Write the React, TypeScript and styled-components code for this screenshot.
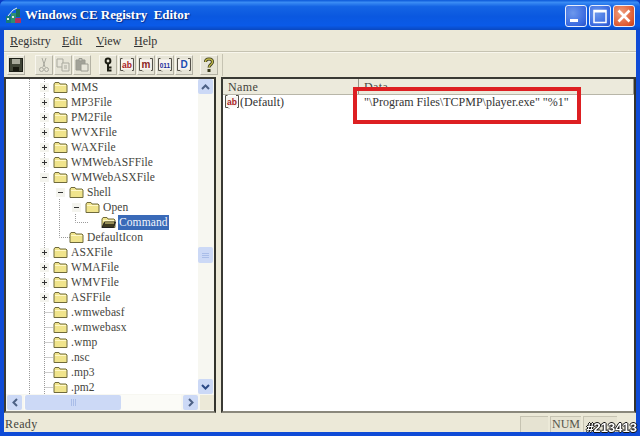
import styled, { createGlobalStyle } from 'styled-components';

const GlobalStyle = createGlobalStyle`
  html, body {
    margin: 0;
    padding: 0;
    width: 640px;
    height: 436px;
    overflow: hidden;
    background: #0a3bc4;
  }
`;

type TreeItem = {
  label: string;
  level: number;
  expander?: 'plus' | 'minus';
  selected?: boolean;
};

const treeItems: TreeItem[] = [
  { label: 'MMS', level: 0, expander: 'plus' },
  { label: 'MP3File', level: 0, expander: 'plus' },
  { label: 'PM2File', level: 0, expander: 'plus' },
  { label: 'WVXFile', level: 0, expander: 'plus' },
  { label: 'WAXFile', level: 0, expander: 'plus' },
  { label: 'WMWebASFFile', level: 0, expander: 'plus' },
  { label: 'WMWebASXFile', level: 0, expander: 'minus' },
  { label: 'Shell', level: 1, expander: 'minus' },
  { label: 'Open', level: 2, expander: 'minus' },
  { label: 'Command', level: 3, selected: true },
  { label: 'DefaultIcon', level: 1 },
  { label: 'ASXFile', level: 0, expander: 'plus' },
  { label: 'WMAFile', level: 0, expander: 'plus' },
  { label: 'WMVFile', level: 0, expander: 'plus' },
  { label: 'ASFFile', level: 0, expander: 'plus' },
  { label: '.wmwebasf', level: 0 },
  { label: '.wmwebasx', level: 0 },
  { label: '.wmp', level: 0 },
  { label: '.nsc', level: 0 },
  { label: '.mp3', level: 0 },
  { label: '.pm2', level: 0 },
];

function FolderIcon({ open }: { open?: boolean }) {
  return (
    <svg width="15" height="13" viewBox="0 0 15 13">
      <path d="M1 3 L2 1.5 H6 L7 3 H13 L14 4 V11.5 H1 Z" fill="#f0e48c" stroke="#6f6a3c" />
      <path d="M2 4.5 H13" stroke="#fff8c8" />
      {open && <path d="M1 11.5 L3.5 6 H14.5 L12.5 11.5 Z" fill="#3d3a20" stroke="#222" />}
      {open && <path d="M4 7 H13" stroke="#f3e58e" />}
    </svg>
  );
}

function SaveIcon() {
  return (
    <svg width="16" height="16" viewBox="0 0 16 16">
      <rect x="1.5" y="1.5" width="13" height="13" fill="#3f4436" stroke="#1c1e16" />
      <rect x="4" y="2" width="8" height="5" fill="#a8aa9c" />
      <rect x="5" y="10" width="6" height="4" fill="#16180f" />
    </svg>
  );
}

function CutIcon() {
  return (
    <svg width="16" height="16" viewBox="0 0 16 16" fill="none" stroke="#a9a99e">
      <path d="M6 1 L9 10 M10 1 L7 10" />
      <circle cx="5.5" cy="12.5" r="2" />
      <circle cx="10.5" cy="12.5" r="2" />
    </svg>
  );
}

function CopyIcon() {
  return (
    <svg width="16" height="16" viewBox="0 0 16 16" fill="#e8e6da" stroke="#a9a99e">
      <path d="M2 2 H8 V10 H2 Z" />
      <path d="M7 6 H14 V14 H7 Z" />
      <path d="M9 9 H12 M9 11 H12" />
    </svg>
  );
}

function PasteIcon() {
  return (
    <svg width="16" height="16" viewBox="0 0 16 16" stroke="#9a9a90">
      <path d="M2 3 H11 V13 H2 Z" fill="#a2a298" />
      <path d="M5 1.5 H8 V4 H5 Z" fill="#c9c9bf" />
      <path d="M7 7 H14 V14 H7 Z" fill="#e8e6da" />
    </svg>
  );
}

function KeyIcon() {
  return (
    <svg width="16" height="16" viewBox="0 0 16 16" fill="none" stroke="#1c1c12" strokeWidth="2">
      <circle cx="8" cy="4" r="2.4" />
      <path d="M8 6.5 V14.5 M8 10.5 H11.5 M8 13.5 H11.5" />
    </svg>
  );
}

function ValueIcon({ text, color, size = 8.5 }: { text: string; color: string; size?: number }) {
  return (
    <svg width="16" height="16" viewBox="0 0 16 16">
      <path d="M2 2.5 H13.5 V12.5 H2 Z" fill="#f8f4f0" />
      <path d="M3.5 1.5 H1.5 V13.5 H4 L5 14.5 M12 1.5 H14.5 V13.5 H13" stroke="#55524a" fill="none" />
      <text
        x="8"
        y="10.5"
        fontSize={size}
        fontWeight="700"
        fontFamily="Liberation Sans, sans-serif"
        textAnchor="middle"
        fill={color}
      >
        {text}
      </text>
    </svg>
  );
}

function HelpIcon() {
  return (
    <svg width="16" height="16" viewBox="0 0 16 16" fill="none">
      <path d="M4.5 5 C4.5 1 11.5 1 11.5 5 C11.5 7.5 8 7.5 8 10.5" stroke="#3a3a1c" strokeWidth="3" />
      <path d="M4.5 5 C4.5 1 11.5 1 11.5 5 C11.5 7.5 8 7.5 8 10.5" stroke="#bdb648" strokeWidth="1.4" />
      <rect x="6.5" y="12" width="3" height="3" fill="#3a3a1c" />
    </svg>
  );
}

function AppIcon() {
  return (
    <svg width="17" height="17" viewBox="0 0 17 17">
      <rect x="1" y="9" width="5" height="7" fill="#177a7a" />
      <rect x="6" y="6" width="5" height="10" fill="#2c8f72" />
      <rect x="10" y="11" width="6" height="5" fill="#b03060" />
      <rect x="11" y="2" width="4" height="8" fill="#1b6f5a" />
      <path d="M3 9 L8 3 L12 1" stroke="#e8f0e8" fill="none" />
      <rect x="2" y="11" width="2" height="2" fill="#d8e8e0" />
      <rect x="7" y="9" width="2" height="2" fill="#d8e8e0" />
    </svg>
  );
}

function App() {
  return (
    <Frame>
      <GlobalStyle />
      <TitleBar>
        <TitleLeft>
          <AppIcon />
          <TitleText>Windows CE Registry&nbsp; Editor</TitleText>
        </TitleLeft>
        <TitleButtons>
          <CaptionButton>
            <svg width="20" height="20" viewBox="0 0 20 20">
              <rect x="4" y="13" width="8" height="3" fill="#fff" />
            </svg>
          </CaptionButton>
          <CaptionButton>
            <svg width="20" height="20" viewBox="0 0 20 20" fill="none" stroke="#fff">
              <rect x="4" y="4.5" width="12" height="12" strokeWidth="1.5" />
              <path d="M4 5.5 H16" strokeWidth="2" />
            </svg>
          </CaptionButton>
          <CaptionButton $danger>
            <svg width="20" height="20" viewBox="0 0 20 20" stroke="#fff" strokeWidth="2.6">
              <path d="M4.5 4.5 L15.5 15.5 M15.5 4.5 L4.5 15.5" />
            </svg>
          </CaptionButton>
        </TitleButtons>
      </TitleBar>

      <Body>
        <MenuBar>
          <MenuItem $width={52}><u>R</u>egistry</MenuItem>
          <MenuItem $width={34}><u>E</u>dit</MenuItem>
          <MenuItem $width={38}><u>V</u>iew</MenuItem>
          <MenuItem $width={40}><u>H</u>elp</MenuItem>
        </MenuBar>

        <ToolBar>
          <ToolButton><SaveIcon /></ToolButton>
          <ToolGap $width={8} />
          <ToolButton><CutIcon /></ToolButton>
          <ToolButton><CopyIcon /></ToolButton>
          <ToolButton><PasteIcon /></ToolButton>
          <ToolGap $width={6} />
          <ToolButton><KeyIcon /></ToolButton>
          <ToolButton><ValueIcon text="ab" color="#a81c24" /></ToolButton>
          <ToolButton><ValueIcon text="m" color="#8c1c1c" size={10} /></ToolButton>
          <ToolButton><ValueIcon text="011" color="#1c2c9c" size={6.5} /></ToolButton>
          <ToolButton><ValueIcon text="D" color="#1c4cb0" size={10} /></ToolButton>
          <ToolGap $width={5} />
          <ToolButton><HelpIcon /></ToolButton>
          <ToolDivider />
        </ToolBar>

        <Panes>
          <TreePane>
            <TreeArea>
              <Tree>
                <TreeLines width="195" height="316" viewBox="0 0 195 316">
                  <g stroke="#9a9a9a" strokeDasharray="1 1" fill="none">
                    <path d="M23.5 0 V316" />
                    <path d="M38.5 0 V316" />
                    <path d="M53.5 120 V158.5 H66" />
                    <path d="M69.5 135 V143.5 H82" />
                    <path d="M38.5 233.5 H47 M38.5 248.5 H47 M38.5 263.5 H47 M38.5 278.5 H47 M38.5 293.5 H47 M38.5 308.5 H47" />
                  </g>
                </TreeLines>
                {treeItems.map((item) => (
                  <TreeRow key={item.label} $level={item.level}>
                    <ExpanderSlot>
                      {item.expander && (
                        <Expander>
                          <svg width="9" height="9" viewBox="0 0 9 9" stroke="#333">
                            <path d="M2 4.5 H7" />
                            {item.expander === 'plus' && <path d="M4.5 2 V7" />}
                          </svg>
                        </Expander>
                      )}
                    </ExpanderSlot>
                    <FolderIcon open={item.selected} />
                    <TreeLabel $selected={item.selected}>{item.label}</TreeLabel>
                  </TreeRow>
                ))}
              </Tree>
              <VScroll>
                <ScrollButton>
                  <svg width="9" height="6" viewBox="0 0 9 6" fill="none" stroke="#4d6185" strokeWidth="2">
                    <path d="M1 5 L4.5 1.5 L8 5" />
                  </svg>
                </ScrollButton>
                <VTrack>
                  <VThumb>
                    <svg width="7" height="7" viewBox="0 0 7 7" stroke="#a9bde8">
                      <path d="M0 1.5 H7 M0 3.5 H7 M0 5.5 H7" />
                    </svg>
                  </VThumb>
                </VTrack>
                <ScrollButton>
                  <svg width="9" height="6" viewBox="0 0 9 6" fill="none" stroke="#2c4a86" strokeWidth="2">
                    <path d="M1 1 L4.5 4.5 L8 1" />
                  </svg>
                </ScrollButton>
              </VScroll>
            </TreeArea>
            <HScroll>
              <ScrollButton>
                <svg width="6" height="9" viewBox="0 0 6 9" fill="none" stroke="#4d6185" strokeWidth="2">
                  <path d="M5 1 L1.5 4.5 L5 8" />
                </svg>
              </ScrollButton>
              <HTrack>
                <HThumb>
                  <svg width="7" height="7" viewBox="0 0 7 7" stroke="#a9bde8">
                    <path d="M1.5 0 V7 M3.5 0 V7 M5.5 0 V7" />
                  </svg>
                </HThumb>
              </HTrack>
              <ScrollButton>
                <svg width="6" height="9" viewBox="0 0 6 9" fill="none" stroke="#4d6185" strokeWidth="2">
                  <path d="M1 1 L4.5 4.5 L1 8" />
                </svg>
              </ScrollButton>
              <ScrollCorner />
            </HScroll>
          </TreePane>

          <ListPane>
            <ListHeader>
              <HeaderCell $width={136}>Name</HeaderCell>
              <HeaderCell $width={275}>Data</HeaderCell>
            </ListHeader>
            <ListRow>
              <ValueIcon text="ab" color="#a81c24" />
              <NameCell>(Default)</NameCell>
              <DataCell>"\Program Files\TCPMP\player.exe" "%1"</DataCell>
            </ListRow>
            <Highlight />
          </ListPane>
        </Panes>

        <StatusBar>
          <StatusMain>Ready</StatusMain>
          <StatusPanel $width={28} />
          <StatusPanel $width={31}>NUM</StatusPanel>
          <StatusPanel $width={34} />
        </StatusBar>
      </Body>
      <Watermark>#213413</Watermark>
    </Frame>
  );
}

const Frame = styled.div`
  position: relative;
  display: flex;
  flex-direction: column;
  width: 640px;
  height: 436px;
  box-sizing: border-box;
  padding: 0 4px 4px;
  background: #0f4bd6;
  border-radius: 6px 6px 0 0;
  font-family: 'Liberation Serif', serif;
  filter: blur(0.4px);
  overflow: hidden;
`;

const TitleBar = styled.div`
  display: flex;
  align-items: center;
  justify-content: space-between;
  height: 30px;
  margin: 0 -4px;
  padding: 0 5px 0 5px;
  flex: none;
  background: linear-gradient(
    180deg,
    #0a57d8 0%,
    #3a8cf4 8%,
    #1464e4 22%,
    #0a58e0 55%,
    #0a5ae8 85%,
    #0a48c0 100%
  );
`;

const TitleLeft = styled.div`
  display: flex;
  align-items: center;
  gap: 3px;
`;

const TitleText = styled.span`
  color: #fff;
  font-size: 13px;
  font-weight: 700;
  letter-spacing: -0.05px;
  text-shadow: 1px 1px 1px #0a2a80;
`;

const TitleButtons = styled.div`
  display: flex;
  gap: 2px;
  margin-top: 2px;
`;

const CaptionButton = styled.div<{ $danger?: boolean }>`
  display: flex;
  align-items: center;
  justify-content: center;
  width: 22px;
  height: 22px;
  box-sizing: border-box;
  border: 1px solid #e8eefc;
  border-radius: 3px;
  background: ${(p) =>
    p.$danger
      ? 'radial-gradient(circle at 35% 35%, #f0a080, #dd5a32 70%, #c83c18)'
      : 'radial-gradient(circle at 35% 35%, #6c98ec, #3a6ae0 70%, #2a50c4)'};
`;

const Body = styled.div`
  display: flex;
  flex-direction: column;
  flex: 1;
  min-height: 0;
  background: #ece9d8;
`;

const MenuBar = styled.div`
  display: flex;
  height: 22px;
  padding: 1px 0 0 6px;
  box-sizing: border-box;
  align-items: center;
  flex: none;
  border-bottom: 1px solid #c6c3b2;
`;

const MenuItem = styled.div<{ $width: number }>`
  width: ${(p) => p.$width}px;
  color: #333;
  font-size: 12px;
`;

const ToolBar = styled.div`
  position: relative;
  display: flex;
  align-items: center;
  gap: 1px;
  height: 25px;
  padding: 0 0 1px 3px;
  box-sizing: border-box;
  flex: none;
  border-top: 1px solid #f8f6ec;
`;

const ToolButton = styled.div`
  display: flex;
  align-items: center;
  justify-content: center;
  width: 18px;
  height: 20px;
  box-sizing: border-box;
  background: #e6e4d6;
  border: 1px solid;
  border-color: #f8f6ee #b4b2a4 #b4b2a4 #f8f6ee;
`;

const ToolGap = styled.div<{ $width: number }>`
  width: ${(p) => p.$width}px;
`;

const ToolDivider = styled.div`
  position: absolute;
  left: 218px;
  top: 1px;
  bottom: 1px;
  width: 1px;
  background: #c6c3b2;
`;

const Panes = styled.div`
  display: flex;
  flex: 1;
  min-height: 0;
  gap: 5px;
  padding-bottom: 1px;
`;

const TreePane = styled.div`
  display: flex;
  flex-direction: column;
  width: 212px;
  box-sizing: border-box;
  background: #fff;
  border: 2px solid;
  border-color: #3a3a34 #33332c #8a887c #3a3a34;
  flex: none;
`;

const TreeArea = styled.div`
  display: flex;
  flex: 1;
  min-height: 0;
`;

const Tree = styled.div`
  position: relative;
  flex: 1;
  min-width: 0;
  padding-top: 1px;
  overflow: hidden;
`;

const TreeLines = styled.svg`
  position: absolute;
  left: 0;
  top: 0;
`;

const TreeRow = styled.div<{ $level: number }>`
  position: relative;
  display: flex;
  align-items: center;
  height: 15px;
  padding-left: ${(p) => 31 + p.$level * 16}px;
`;

const ExpanderSlot = styled.div`
  display: flex;
  align-items: center;
  justify-content: center;
  width: 14px;
  height: 15px;
  margin-right: 2px;
  flex: none;
`;

const Expander = styled.div`
  display: flex;
  width: 9px;
  height: 9px;
  background: #f4f4ee;
`;

const TreeLabel = styled.span<{ $selected?: boolean }>`
  margin-left: 2px;
  padding: 0 1px;
  height: 15px;
  line-height: 15px;
  font-size: 11.5px;
  letter-spacing: 0.1px;
  white-space: nowrap;
  color: ${(p) => (p.$selected ? '#f4f6fc' : '#44443c')};
  background: ${(p) => (p.$selected ? '#3a6ab8' : 'transparent')};
`;

const VScroll = styled.div`
  display: flex;
  flex-direction: column;
  width: 16px;
  flex: none;
  background: #f7f7f1;
`;

const ScrollButton = styled.div`
  display: flex;
  align-items: center;
  justify-content: center;
  width: 15px;
  height: 15px;
  flex: none;
  background: #ccd9f6;
  border-radius: 2px;
`;

const VTrack = styled.div`
  flex: 1;
  position: relative;
  display: flex;
  flex-direction: column;
  justify-content: flex-end;
  padding-bottom: 116px;
`;

const VThumb = styled.div`
  display: flex;
  align-items: center;
  justify-content: center;
  width: 15px;
  height: 16px;
  background: #ccd9f6;
  border-radius: 2px;
`;

const HScroll = styled.div`
  display: flex;
  height: 17px;
  padding: 1px 0 1px 1px;
  box-sizing: border-box;
  gap: 2px;
  flex: none;
  background: #f7f7f1;
`;

const HTrack = styled.div`
  flex: 1;
  display: flex;
  padding-left: 1px;
  background: #fbfbf7;
`;

const HThumb = styled.div`
  display: flex;
  align-items: center;
  justify-content: center;
  width: 96px;
  background: #ccd9f6;
  border-radius: 2px;
`;

const ScrollCorner = styled.div`
  width: 14px;
  background: #ece9d8;
`;

const ListPane = styled.div`
  position: relative;
  display: flex;
  flex-direction: column;
  flex: 1;
  min-width: 0;
  box-sizing: border-box;
  background: #fff;
  border: 2px solid;
  border-color: #3a3a34 #33332c #8a887c #3a3a34;
`;

const ListHeader = styled.div`
  display: flex;
  height: 15px;
  flex: none;
  background: #eceadc;
  border-bottom: 1px solid #b8b6a8;
`;

const HeaderCell = styled.div<{ $width: number }>`
  width: ${(p) => p.$width}px;
  box-sizing: border-box;
  padding-left: 5px;
  font-size: 12px;
  line-height: 17px;
  letter-spacing: 0.4px;
  color: #44443c;
  border-right: 1px solid #98968a;
`;

const ListRow = styled.div`
  display: flex;
  align-items: center;
  height: 14px;
  padding-left: 1px;
`;

const NameCell = styled.div`
  width: 124px;
  font-size: 12px;
  color: #333;
`;

const DataCell = styled.div`
  font-size: 12px;
  color: #333;
  white-space: nowrap;
`;

const Highlight = styled.div`
  position: absolute;
  left: 130px;
  top: 8px;
  width: 228px;
  height: 37px;
  box-sizing: border-box;
  border: 4px solid #dd1f22;
`;

const StatusBar = styled.div`
  display: flex;
  gap: 2px;
  height: 18px;
  padding: 2px 19px 0 1px;
  box-sizing: border-box;
  flex: none;
`;

const StatusMain = styled.div`
  flex: 1;
  font-size: 12px;
  line-height: 16px;
  letter-spacing: 0.4px;
  color: #44443c;
`;

const StatusPanel = styled.div<{ $width: number }>`
  width: ${(p) => p.$width}px;
  box-sizing: border-box;
  text-align: center;
  font-size: 12px;
  line-height: 15px;
  color: #55554c;
  background: #e6e3d2;
  border-top: 1px solid #c6c3b2;
  border-left: 1px solid #c6c3b2;
`;

const Watermark = styled.div`
  position: absolute;
  right: 3px;
  bottom: 1px;
  font-family: 'Liberation Sans', sans-serif;
  font-size: 13px;
  font-weight: 700;
  line-height: 14px;
  color: #fff;
  text-shadow: -1px 0 #111, 1px 0 #111, 0 -1px #111, 0 1px #111;
`;

export default App;
